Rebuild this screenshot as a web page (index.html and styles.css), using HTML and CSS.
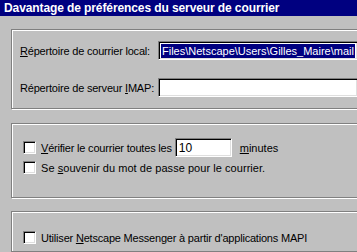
FILE: index.html
```html
<!DOCTYPE html>
<html lang="fr">
<head>
<meta charset="utf-8">
<title>Serveur de courrier</title>
<link rel="stylesheet" href="styles.css">
</head>
<body>
<div class="page">
  <div class="title">Davantage de préférences du serveur de courrier</div>

  <div class="group g1">
    <div class="row">
      <span class="label"><u>R</u>épertoire de courrier local:</span>
      <div class="field wide"><span class="sel">Files\Netscape\Users\Gilles_Maire\mail</span></div>
    </div>
    <div class="row r2">
      <span class="label">Répertoire de serveur <u>I</u>MAP:</span>
      <div class="field wide"></div>
    </div>
  </div>

  <div class="group g2">
    <div class="crow">
      <span class="box"></span>
      <span class="ctext"><u>V</u>érifier le courrier toutes les</span>
      <div class="field small"><span class="val">10</span></div>
      <span class="unit"><u>m</u>inutes</span>
    </div>
    <div class="crow c2">
      <span class="box"></span>
      <span class="ctext wider">Se <u>s</u>ouvenir du mot de passe pour le courrier.</span>
    </div>
  </div>

  <div class="group g3">
    <div class="crow">
      <span class="box"></span>
      <span class="ctext">Utiliser <u>N</u>etscape Messenger à partir d'applications MAPI</span>
    </div>
  </div>
</div>
</body>
</html>
```

FILE: styles.css
```css
html, body {
  margin: 0;
  padding: 0;
  background: #c0c0c0;
}
.page {
  width: 357px;
  height: 252px;
  overflow: hidden;
  background: #c0c0c0;
  font-family: "Liberation Sans", Arial, sans-serif;
  font-size: 11px;
  color: #000;
}
.title {
  height: 16px;
  line-height: 16px;
  background: #000080;
  color: #fff;
  font-weight: bold;
  font-size: 12px;
  letter-spacing: -0.1px;
  padding-left: 4px;
  white-space: nowrap;
}
.group {
  box-sizing: border-box;
  margin-left: 11px;
  width: 420px;
  border: 1px solid #808080;
  box-shadow: inset 1px 1px #fff, 1px 1px #fff;
}
.g1 {
  margin-top: 13px;
  height: 80px;
  padding: 11px 0 0 8px;
}
.g2 {
  margin-top: 14px;
  height: 75px;
  padding: 14px 0 0 11px;
}
.g3 {
  margin-top: 13px;
  height: 41px;
  padding: 16px 0 0 11px;
}
.row {
  display: flex;
  align-items: center;
  height: 19px;
}
.r2 {
  margin-top: 18px;
}
.label {
  width: 138px;
  flex: none;
  white-space: nowrap;
  letter-spacing: -0.2px;
}
.field {
  box-sizing: border-box;
  height: 19px;
  background: #fff;
  border: 1px solid;
  border-color: #808080 #fff #fff #808080;
  box-shadow: inset 1px 1px #000, inset -1px -1px #dfdfdf;
  display: flex;
  align-items: center;
  overflow: hidden;
  white-space: nowrap;
}
.wide {
  width: 200px;
  padding: 2px 3px 2px 2px;
}
.sel {
  background: #000080;
  color: #fff;
  line-height: 14px;
  height: 14px;
  padding: 0 1px;
  flex: none;
}
.small {
  width: 57px;
  margin-left: 3px;
  padding-left: 3px;
}
.val {
  font-size: 12px;
}
.crow {
  display: flex;
  align-items: center;
  height: 19px;
  white-space: nowrap;
}
.c2 {
  margin-top: 3px;
  height: 15px;
}
.box {
  box-sizing: border-box;
  flex: none;
  width: 13px;
  height: 13px;
  background: #fff;
  border: 1px solid;
  border-color: #808080 #fff #fff #808080;
  box-shadow: inset 1px 1px #000, inset -1px -1px #dfdfdf;
}
.ctext {
  margin-left: 5px;
  letter-spacing: -0.2px;
}
.wider {
  letter-spacing: 0.05px;
}
.unit {
  margin-left: 8px;
}
```
